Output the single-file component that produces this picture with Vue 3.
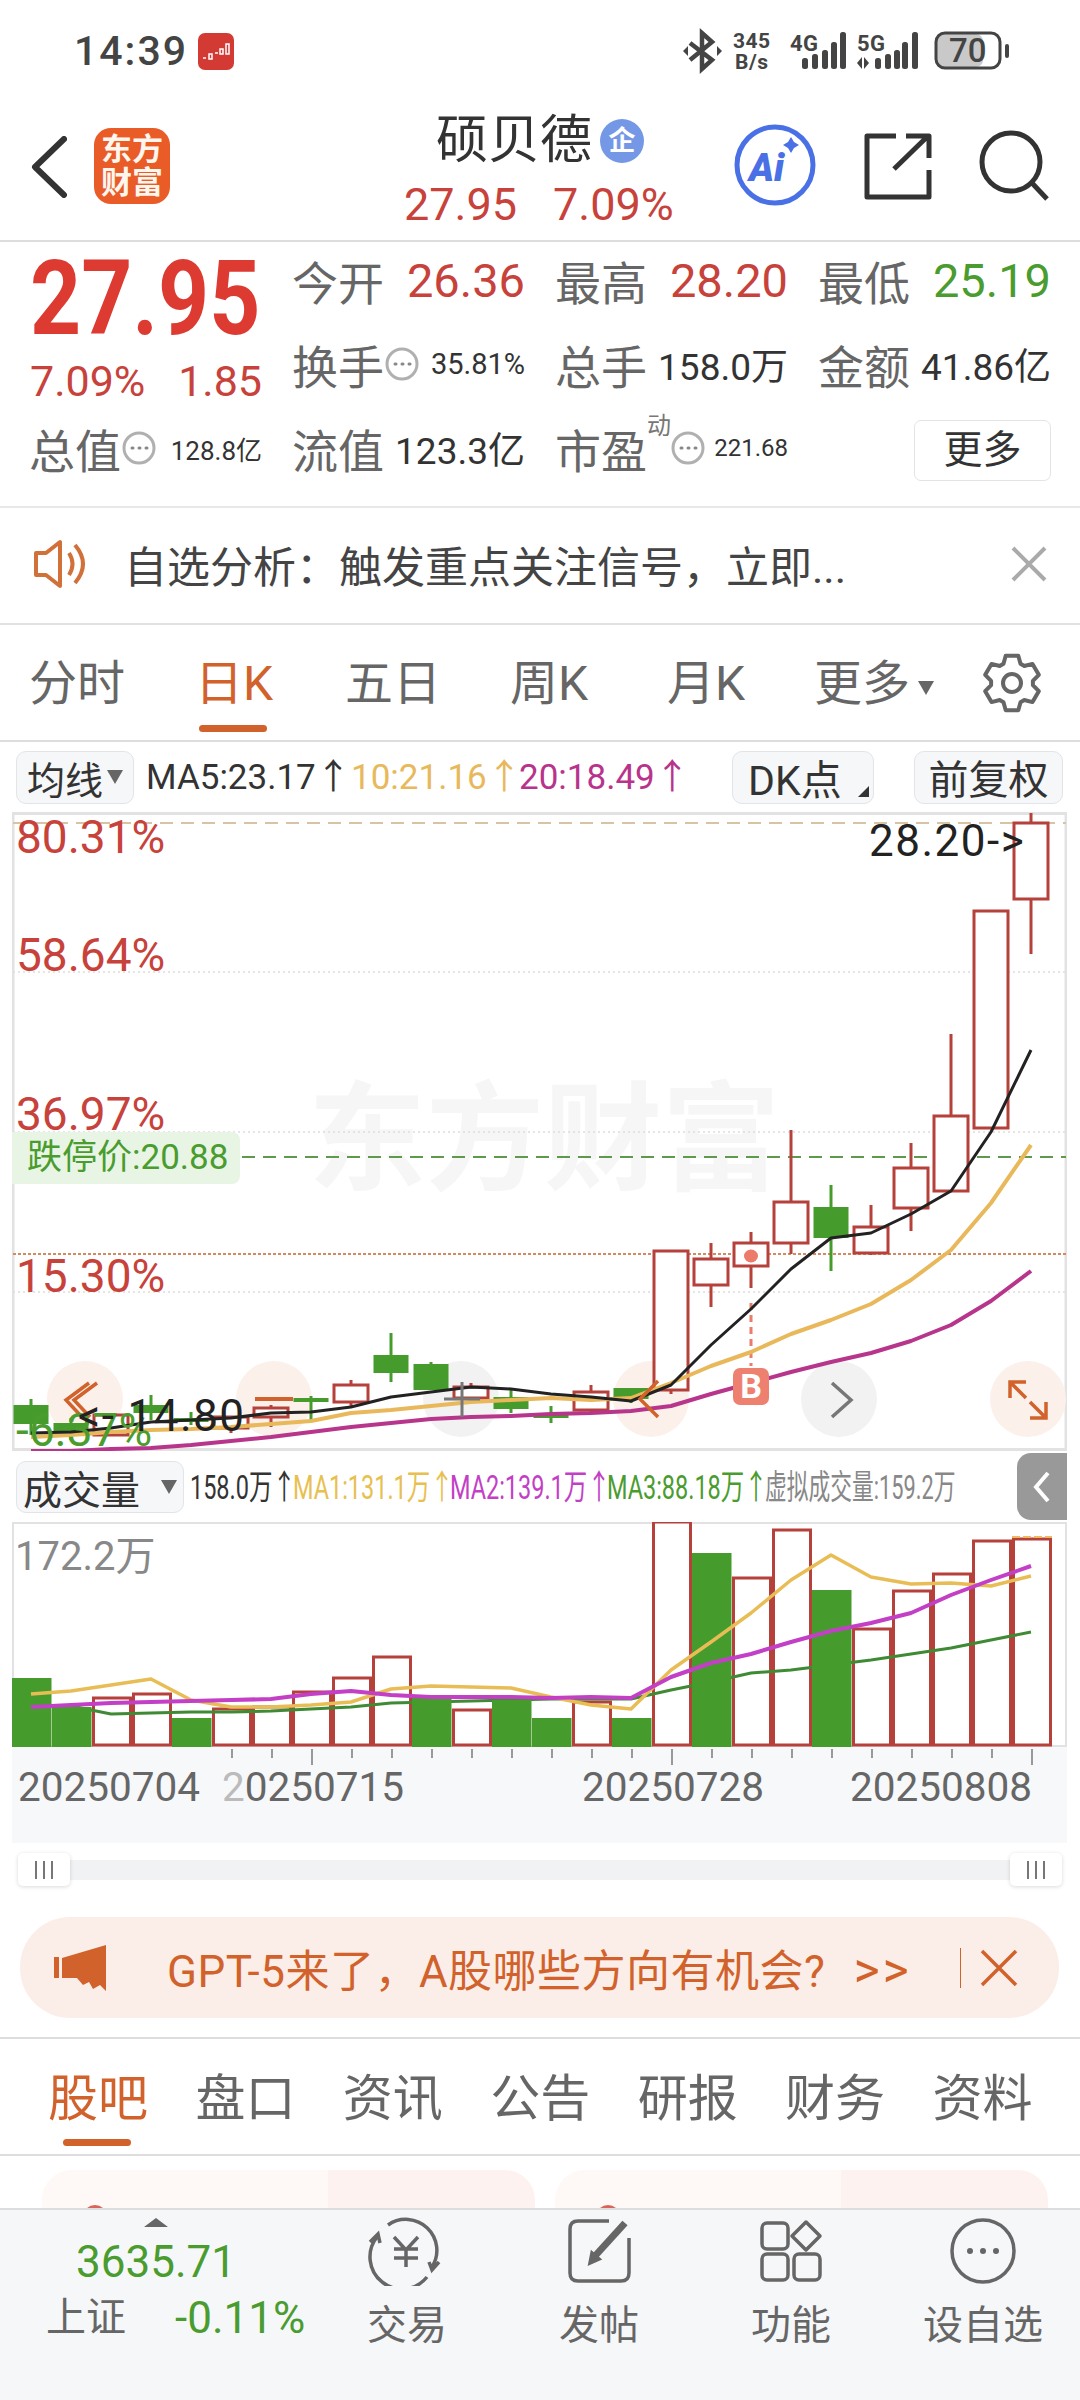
<template>
  <div class="page">
    <!-- status bar -->
    <div class="status">
      <span class="time">14:39</span>
      <svg class="app-icon" width="36" height="37" viewBox="0 0 36 37">
        <rect width="36" height="37" rx="7" fill="#d33a34" />
        <path d="M5 25h3M11 21h3v5h-3zM17 20h3M22 16h3v5h-3zM28 11h3v10h-3z" stroke="#fff" stroke-width="1.5" fill="none" />
      </svg>
      <svg class="status-right" width="335" height="50" viewBox="680 25 335 50">
        <path d="M690 43L712 60L702 69V33L712 42L690 60" fill="none" stroke="#444" stroke-width="4.5" />
        <path d="M688 46v10l-5-5zM717 46v10l5-5z" fill="#444" />
        <text x="733" y="48" class="st-txt">345</text>
        <text x="735" y="69" class="st-txt">B/s</text>
        <text x="790" y="51" class="st-txt narrow">4G</text>
        <rect v-for="b in signal4g" :key="b.x" :x="b.x" :y="b.y" width="6" :height="69 - b.y" rx="2.5" fill="#444" />
        <text x="857" y="51" class="st-txt narrow">5G</text>
        <path d="M857 63l5-6v12zM864 57l5 6-5 6z" fill="#444" />
        <rect v-for="b in signal5g" :key="b.x" :x="b.x" :y="b.y" width="6" :height="69 - b.y" rx="2.5" fill="#444" />
        <rect x="937" y="34" width="46" height="33" rx="7" fill="#c9c9c9" />
        <rect x="936" y="33" width="64" height="35" rx="9" fill="none" stroke="#444" stroke-width="3" />
        <text x="949" y="62" class="batt-txt">70</text>
        <rect x="1005" y="44" width="4" height="14" rx="2" fill="#444" />
      </svg>
    </div>

    <!-- nav -->
    <div class="nav">
      <svg class="back" width="36" height="62" viewBox="0 0 36 62">
        <path d="M33 3L4 31L33 59" fill="none" stroke="#333" stroke-width="6" stroke-linecap="round" stroke-linejoin="round" />
      </svg>
      <div class="logo">东方<br />财富</div>
      <div class="nav-title">
        <div class="name-row">
          <span class="name">硕贝德</span>
          <span class="qi">企</span>
        </div>
        <div class="nav-sub"><span>27.95</span><span>7.09%</span></div>
      </div>
      <svg class="ai" width="82" height="82" viewBox="0 0 82 82">
        <circle cx="41" cy="41" r="38" fill="none" stroke="#4a70e6" stroke-width="5" />
        <text x="15" y="57" class="ai-txt">Ai</text>
        <path d="M57 13l3 5 5 3-5 3-3 5-3-5-5-3 5-3z" fill="#4a70e6" />
      </svg>
      <svg class="share" width="68" height="68" viewBox="0 0 68 68">
        <path d="M32 4H3V65H65V38M30 37L64 4M42 4H65V26" fill="none" stroke="#333" stroke-width="5" stroke-linejoin="round" />
      </svg>
      <svg class="search" width="72" height="72" viewBox="0 0 72 72">
        <circle cx="33" cy="33" r="29" fill="none" stroke="#333" stroke-width="5" />
        <path d="M54 54L69 70" stroke="#333" stroke-width="5" />
      </svg>
    </div>

    <!-- quote grid -->
    <div class="quote">
      <div class="big"><span>27.95</span></div>
      <div class="cell"><span class="lb">今开</span><span class="val red">26.36</span></div>
      <div class="cell"><span class="lb">最高</span><span class="val red">28.20</span></div>
      <div class="cell"><span class="lb">最低</span><span class="val green">25.19</span></div>

      <div class="change"><span>7.09%</span><span>1.85</span></div>
      <div class="cell">
        <span class="lb">换手</span>
        <svg class="dots" viewBox="0 0 34 34"><circle cx="17" cy="17" r="15" /><path d="M10 17h1M17 17h1M24 17h1" /></svg>
        <span class="val mini wide">35.81%</span>
      </div>
      <div class="cell"><span class="lb">总手</span><span class="val mid">158.0万</span></div>
      <div class="cell"><span class="lb">金额</span><span class="val mid">41.86亿</span></div>

      <div class="cell">
        <span class="lb">总值</span>
        <svg class="dots" viewBox="0 0 34 34"><circle cx="17" cy="17" r="15" /><path d="M10 17h1M17 17h1M24 17h1" /></svg>
        <span class="val mini">128.8亿</span>
      </div>
      <div class="cell"><span class="lb">流值</span><span class="val mid">123.3亿</span></div>
      <div class="cell">
        <span class="lb">市盈</span><sup class="dong">动</sup>
        <svg class="dots" viewBox="0 0 34 34"><circle cx="17" cy="17" r="15" /><path d="M10 17h1M17 17h1M24 17h1" /></svg>
        <span class="val mini small">221.68</span>
      </div>
      <div class="more-cell"><span class="more-btn">更多</span></div>
    </div>

    <!-- notice -->
    <div class="notice">
      <svg width="58" height="50" viewBox="0 0 58 50">
        <path d="M3 14H13L27 3V47L13 36H3Z M27 3V47" fill="none" stroke="#d2703a" stroke-width="4" stroke-linejoin="round" />
        <path d="M36 14Q43 25 36 36M42 6Q58 25 42 44" fill="none" stroke="#d2703a" stroke-width="4" />
      </svg>
      <span class="notice-txt">自选分析&#xFF1A;触发重点关注信号&#xFF0C;立即...</span>
      <svg width="36" height="36" viewBox="0 0 36 36">
        <path d="M2 2L34 34M34 2L2 34" stroke="#aaa" stroke-width="4" />
      </svg>
    </div>

    <!-- period tabs -->
    <div class="tabs">
      <div v-for="t in periodTabs" :key="t.name" class="tab" :class="{ on: t.on }" :style="{ width: t.w + 'px' }">
        <span class="tab-txt">{{ t.name }}<i v-if="t.arrow" class="tab-arrow"></i></span>
        <span v-if="t.on" class="tab-bar"></span>
      </div>
      <svg class="gear" width="60" height="60" viewBox="0 0 60 60">
        <path :d="gearPath" fill="none" stroke="#666" stroke-width="4" stroke-linejoin="round" />
        <circle cx="30" cy="30" r="9" fill="none" stroke="#666" stroke-width="4" />
      </svg>
    </div>

    <!-- MA header -->
    <div class="ma-head">
      <span class="sel">均线<i class="sel-arrow"></i></span>
      <span class="ma ma5">MA5:23.17↑</span>
      <span class="ma ma10">10:21.16↑</span>
      <span class="ma ma20">20:18.49↑</span>
      <span class="sel dk">DK点<i class="corner"></i></span>
      <span class="sel fq">前复权</span>
    </div>

    <!-- candle chart -->
    <div class="kline">
      <svg class="chart-svg" width="1055" height="639" viewBox="12 812 1055 639">
        <rect x="13" y="813.5" width="1053" height="636" fill="none" stroke="#e2e2e2" stroke-width="3" />
        <path v-for="y in [972, 1132, 1292]" :key="y" :d="`M13 ${y}H1066`" stroke="#ddd" stroke-width="1.5" stroke-dasharray="2 3" />
        <path d="M13 823H1066" stroke="#d8c3a5" stroke-width="2" stroke-dasharray="13 8" />
        <path d="M242 1157H1066" stroke="#5f9a4c" stroke-width="2" stroke-dasharray="13 8" />
        <path d="M13 1254H1066" stroke="#d38a62" stroke-width="2" stroke-dasharray="3 2" />

        <g clip-path="url(#btnClip)">
          <circle v-for="b in chartBtns" :key="b.x" :cx="b.x" cy="1399" r="38" :fill="b.fill" />
        </g>

        <g v-for="c in candles" :key="c.x">
          <path :d="`M${c.x} ${c.wt}V${c.wb}`" :stroke="c.up ? '#b5413a' : '#459c2d'" stroke-width="3" />
          <rect v-if="c.up" :x="c.x - 17" :y="c.top" width="34" :height="c.bot - c.top" fill="#fff" stroke="#b5413a" stroke-width="3" />
          <rect v-else :x="c.x - 17.5" :y="c.top" width="35" :height="c.bot - c.top" fill="#459c2d" />
        </g>

        <ellipse cx="751" cy="1256" rx="7" ry="6.5" fill="#ec7b6c" />
        <path d="M751 1303V1366" stroke="#ec7b6c" stroke-width="3" stroke-dasharray="7 5" />

        <polyline :points="ma20Pts" class="ln" stroke="#b8358c" stroke-width="4" />
        <polyline :points="ma10Pts" class="ln" stroke="#e9b85a" stroke-width="4" />
        <polyline :points="ma5Pts" class="ln" stroke="#222" stroke-width="3" />

        <rect x="733" y="1368" width="36" height="37" rx="7" fill="#ee8070" />
        <text x="751" y="1398" text-anchor="middle" class="b-txt">B</text>

        <path d="M97 1383L74 1400L90 1417M89 1383L66 1400L82 1417" fill="none" stroke="#d2622b" stroke-width="3.5" />
        <path d="M255 1399H293" stroke="#d2622b" stroke-width="4" />
        <path d="M444 1399H480M462 1382V1417" stroke="#777" stroke-width="3" />
        <path d="M658 1381L640 1399L658 1417" fill="none" stroke="#d2622b" stroke-width="3.5" />
        <path d="M832 1383L851 1400L832 1417" fill="none" stroke="#777" stroke-width="3.5" />
        <path d="M1010 1398V1382H1026M1010 1382L1026 1398M1046 1402V1418H1030M1046 1418L1030 1402" fill="none" stroke="#d2622b" stroke-width="3.5" />

        <defs>
          <clipPath id="btnClip"><rect x="12" y="1355" width="1055" height="82" /></clipPath>
        </defs>
      </svg>

      <div class="watermark">东方财富</div>
      <span class="pct p80">80.31%</span>
      <span class="pct p58">58.64%</span>
      <span class="pct p36">36.97%</span>
      <span class="pct p15">15.30%</span>
      <span class="pct pneg">-6.37%</span>
      <span class="limit">跌停价:20.88</span>
      <span class="mark high">28.20-></span>
      <span class="mark low">&lt;-<span class="low-num">14.80</span></span>
    </div>

    <!-- volume header -->
    <div class="vol-head">
      <span class="sel vol-sel">成交量<i class="sel-arrow"></i></span>
      <div v-for="l in volLegend" :key="l.text" class="leg" :style="{ width: l.w + 'px' }">
        <span class="leg-txt" :class="l.cls">{{ l.text }}</span>
      </div>
      <div class="side-tab">
        <svg width="18" height="32" viewBox="0 0 18 32">
          <path d="M15 2L3 16L15 30" fill="none" stroke="#fff" stroke-width="4" />
        </svg>
      </div>
    </div>

    <!-- volume chart -->
    <div class="vol">
      <svg class="chart-svg" width="1055" height="225" viewBox="12 1522 1055 225">
        <rect x="13" y="1523" width="1053" height="223" fill="none" stroke="#e2e2e2" stroke-width="2" />
        <rect v-for="b in redBars" :key="b.x" :x="b.x + 1.5" :y="b.top" width="37" :height="1745 - b.top" fill="#fff" stroke="#b5413a" stroke-width="3" />
        <path d="M1012 1537H1052" stroke="#f0b860" stroke-width="2" stroke-dasharray="8 3" />
        <polyline :points="ma3Pts" class="ln" stroke="#3f8a34" stroke-width="3" />
        <rect v-for="b in greenBars" :key="b.x" :x="b.x" :y="b.top" width="39.5" :height="1747 - b.top" fill="#459c2d" />
        <polyline :points="ma1Pts" class="ln" stroke="#e9bd55" stroke-width="3.5" />
        <polyline :points="ma2Pts" class="ln" stroke="#c23fc6" stroke-width="4" />
      </svg>
      <span class="vol-max">172.2万</span>
    </div>

    <!-- dates -->
    <div class="dates">
      <svg class="ticks" width="1055" height="18" viewBox="12 1747 1055 18">
        <path v-for="t in ticks" :key="t.x" :d="`M${t.x} 1749V${t.long ? 1765 : 1758}`" stroke="#999" stroke-width="2" />
      </svg>
      <div class="date-row">
        <span class="d1">20250704</span>
        <span class="d2"><em>2</em>0250715</span>
        <span class="d3">20250728</span>
        <span>20250808</span>
      </div>
    </div>

    <!-- range slider -->
    <div class="slider-wrap">
      <div class="slider">
        <div class="handle"><i></i><i></i><i></i></div>
        <div class="handle"><i></i><i></i><i></i></div>
      </div>
    </div>

    <!-- banner -->
    <div class="banner-wrap">
      <div class="banner">
        <svg width="54" height="46" viewBox="0 0 54 46">
          <path d="M1 12H6V33H1ZM9 13L53 0V46L47 40L40 44L36 37L30 40L24 33H9Z" fill="#d2622b" />
        </svg>
        <span class="banner-txt">GPT-5来了&#xFF0C;A股哪些方向有机会?<span class="banner-go">>></span></span>
        <i class="banner-sep"></i>
        <svg width="38" height="38" viewBox="0 0 38 38">
          <path d="M2 2L36 36M36 2L2 36" stroke="#d2622b" stroke-width="3.5" />
        </svg>
      </div>
    </div>

    <!-- info tabs -->
    <div class="tabs info">
      <div v-for="(t, i) in infoTabs" :key="t" class="tab" :class="{ on: i === 0 }">
        <span class="tab-txt">{{ t }}</span>
        <span v-if="i === 0" class="tab-bar"></span>
      </div>
    </div>

    <!-- feed cards, cut off by the dock -->
    <div class="cards">
      <div class="card"><i class="card-dot"></i></div>
      <div class="card"><i class="card-dot"></i></div>
    </div>

    <!-- dock -->
    <div class="dock">
      <div class="index">
        <i class="up-tri"></i>
        <span class="idx-val">3635.71</span>
        <div class="idx-row"><span class="idx-name">上证</span><span class="idx-pct">-0.11%</span></div>
      </div>
      <div class="dock-item">
        <svg width="80" height="70" viewBox="0 0 80 70" class="dock-ic">
          <path d="M21 9A31 31 0 0 1 65 51M60 61A31 31 0 0 1 10 21M72 46L65 54L62 46M3 26L11 18L13 27" />
          <path d="M27 21L39 34L51 21M39 34V51M27 33H51M27 42H51" />
        </svg>
        <span>交易</span>
      </div>
      <div class="dock-item">
        <svg width="80" height="70" viewBox="0 0 80 70" class="dock-ic">
          <path d="M50 5H19Q11 5 11 13V57Q11 65 19 65H62Q70 65 70 57V22" />
          <path d="M36 40L66 7" stroke-width="7" />
          <path d="M31 47L33 37L40 43Z" fill="#666" />
        </svg>
        <span>发帖</span>
      </div>
      <div class="dock-item">
        <svg width="80" height="70" viewBox="0 0 80 70" class="dock-ic">
          <rect x="11" y="7" width="26" height="26" rx="5" />
          <path d="M55 6L69 20L55 34L41 20Z" stroke-linejoin="round" />
          <rect x="11" y="38" width="26" height="26" rx="5" />
          <rect x="43" y="38" width="26" height="26" rx="5" />
        </svg>
        <span>功能</span>
      </div>
      <div class="dock-item">
        <svg width="80" height="70" viewBox="0 0 80 70" class="dock-ic">
          <circle cx="40" cy="35" r="31" />
          <circle cx="27" cy="35" r="3" fill="#666" stroke="none" />
          <circle cx="40" cy="35" r="3" fill="#666" stroke="none" />
          <circle cx="53" cy="35" r="3" fill="#666" stroke="none" />
        </svg>
        <span>设自选</span>
      </div>
    </div>
  </div>
</template>

<script setup>
const tops = [58, 54, 50, 42, 32]
const signal4g = [805, 815, 825, 834, 843].map((x, i) => ({ x: x - 3, y: tops[i] }))
const signal5g = [878, 888, 897, 905, 915].map((x, i) => ({ x: x - 3, y: tops[i] }))

const periodTabs = [
  { name: '分时', w: 170 },
  { name: '日K', w: 146, on: true },
  { name: '五日', w: 165 },
  { name: '周K', w: 157 },
  { name: '月K', w: 147 },
  { name: '更多', w: 170, arrow: true }
]
const infoTabs = ['股吧', '盘口', '资讯', '公告', '研报', '财务', '资料']

// six tooth gear outline
const gearPath = (() => {
  const pts = []
  for (let k = 0; k < 6; k++) {
    const a = -90 + k * 60
    for (const [r, d] of [[21, -24], [28, -13], [28, 13], [21, 24]]) {
      const rad = ((a + d) * Math.PI) / 180
      pts.push(`${(30 + r * Math.cos(rad)).toFixed(1)} ${(30 + r * Math.sin(rad)).toFixed(1)}`)
    }
  }
  return 'M' + pts.join('L') + 'Z'
})()

const chartBtns = [
  { x: 85, fill: '#fbf0ea' },
  { x: 274, fill: '#fbf0ea' },
  { x: 461, fill: '#f2f2f2' },
  { x: 651, fill: '#fbf0ea' },
  { x: 839, fill: '#f2f2f2' },
  { x: 1028, fill: '#fbf0ea' }
]

// top, bottom, wick top, wick bottom, up
const candleRows = [
  [1405, 1424, 1399, 1435, 0],
  [1423, 1433, 1418, 1440, 0],
  [1415, 1435, 1415, 1435, 1],
  [1405, 1413, 1395, 1420, 0],
  [1418, 1422, 1412, 1425, 0],
  [1417, 1428, 1417, 1433, 1],
  [1408, 1417, 1405, 1427, 1],
  [1398, 1402, 1396, 1422, 0],
  [1385, 1402, 1380, 1406, 1],
  [1355, 1373, 1333, 1382, 0],
  [1364, 1390, 1362, 1390, 0],
  [1387, 1398, 1383, 1400, 1],
  [1397, 1409, 1390, 1413, 0],
  [1413, 1418, 1406, 1423, 0],
  [1392, 1410, 1385, 1413, 1],
  [1388, 1399, 1388, 1403, 0],
  [1251, 1390, 1251, 1394, 1],
  [1259, 1285, 1243, 1307, 1],
  [1243, 1266, 1232, 1288, 1],
  [1202, 1243, 1130, 1254, 1],
  [1207, 1238, 1185, 1271, 0],
  [1227, 1253, 1205, 1255, 1],
  [1168, 1208, 1143, 1231, 1],
  [1116, 1191, 1034, 1191, 1],
  [911, 1128, 911, 1128, 1],
  [823, 899, 813, 954, 1]
]
const candles = candleRows.map((r, i) => ({ x: 31 + 40 * i, top: r[0], bot: r[1], wt: r[2], wb: r[3], up: !!r[4] }))

const toPts = ys => ys.map((y, i) => `${31 + 40 * i},${y}`).join(' ')
const ma5Pts = toPts([1433, 1432, 1428, 1422, 1420, 1418, 1413, 1412, 1407, 1397, 1392, 1387, 1389, 1394, 1397, 1401, 1385, 1345, 1309, 1269, 1238, 1233, 1214, 1191, 1132, 1050])
const ma10Pts = toPts([1437, 1435, 1432, 1430, 1429, 1427, 1424, 1421, 1413, 1410, 1406, 1402, 1400, 1398, 1400, 1398, 1383, 1366, 1352, 1334, 1320, 1304, 1280, 1250, 1203, 1145])
const ma20Pts = toPts([1451, 1451, 1449, 1448, 1445, 1441, 1437, 1432, 1427, 1423, 1419, 1417, 1416, 1414, 1413, 1411, 1406, 1394, 1383, 1372, 1362, 1353, 1341, 1325, 1301, 1271])

const volTops = [1678, 1707, 1698, 1694, 1718, 1709, 1707, 1692, 1678, 1657, 1698, 1710, 1700, 1718, 1702, 1718, 1522, 1553, 1578, 1530, 1590, 1629, 1591, 1574, 1541, 1539]
const greenIdx = [0, 1, 4, 10, 12, 13, 15, 17, 20]
const volBars = volTops.map((top, i) => ({ x: 12 + 40 * i, top, green: greenIdx.includes(i) }))
const redBars = volBars.filter(b => !b.green)
const greenBars = volBars.filter(b => b.green)
const ma1Pts = toPts([1694, 1691, 1685, 1679, 1700, 1707, 1707, 1705, 1702, 1689, 1686, 1687, 1688, 1697, 1705, 1709, 1670, 1642, 1613, 1580, 1555, 1577, 1584, 1583, 1586, 1576])
const ma2Pts = toPts([1707, 1705, 1703, 1702, 1701, 1700, 1699, 1694, 1691, 1695, 1697, 1697, 1697, 1698, 1697, 1698, 1677, 1663, 1654, 1642, 1631, 1623, 1613, 1595, 1580, 1566])
const ma3Pts = toPts([1707, 1706, 1714, 1713, 1712, 1712, 1711, 1709, 1707, 1703, 1702, 1701, 1700, 1699, 1699, 1699, 1690, 1682, 1673, 1670, 1665, 1660, 1654, 1648, 1640, 1632])

const volLegend = [
  { text: '158.0万↑', w: 103, cls: 'k' },
  { text: 'MA1:131.1万↑', w: 157, cls: 'y' },
  { text: 'MA2:139.1万↑', w: 157, cls: 'p' },
  { text: 'MA3:88.18万↑', w: 158, cls: 'g' },
  { text: '虚拟成交量:159.2万', w: 190, cls: 'v' }
]

const ticks = Array.from({ length: 21 }, (_, i) => {
  const idx = i + 5
  return { x: 32 + 40 * idx, long: idx === 7 || idx === 16 || idx === 25 }
})
</script>

<style scoped>
.page {
  width: 1080px;
  height: 2400px;
  overflow: hidden;
  background: #fff;
  font-family: Roboto, "Noto Sans CJK SC", sans-serif;
  color: #333;
}

.status {
  height: 100px;
  display: flex;
  align-items: flex-start;
  padding: 26px 0 0 74px;
  box-sizing: border-box;
}
.time {
  font-size: 41px;
  line-height: 50px;
  letter-spacing: 2px;
  color: #444;
  font-weight: 500;
}
.app-icon {
  margin: 7px 0 0 10px;
}
.status-right {
  margin-left: auto;
  margin-right: 65px;
  margin-top: -1px;
}
.st-txt {
  font: 700 21px Roboto, sans-serif;
  fill: #444;
  letter-spacing: .5px;
}
.narrow {
  font-size: 22px;
}
.batt-txt {
  font: 500 33px Roboto, sans-serif;
  fill: #444;
}

.nav {
  height: 142px;
  border-bottom: 2px solid #ddd;
  box-sizing: border-box;
  position: relative;
  display: flex;
  align-items: flex-start;
}
.back {
  margin: 36px 0 0 31px;
}
.logo {
  width: 76px;
  height: 76px;
  margin: 28px 0 0 27px;
  border-radius: 17px;
  background: #e95b27;
  color: #fff6ee;
  font-size: 31px;
  font-weight: 700;
  line-height: 33px;
  text-align: center;
  padding-top: 5px;
  box-sizing: border-box;
}
.nav-title {
  width: 330px;
  margin: 10px 0 0 176px;
  display: flex;
  flex-direction: column;
  align-items: flex-start;
}
.name-row {
  display: flex;
  align-items: center;
  margin-left: 90px;
}
.name {
  font-size: 52px;
  line-height: 62px;
  color: #333;
}
.qi {
  width: 44px;
  height: 44px;
  margin-left: 8px;
  border-radius: 50%;
  background: #7498e6;
  color: #fff;
  font-size: 27px;
  font-weight: 700;
  line-height: 44px;
  text-align: center;
}
.nav-sub {
  display: flex;
  gap: 36px;
  margin: 9px 0 0 58px;
  font-size: 45px;
  line-height: 48px;
  color: #c8423c;
}
.ai {
  margin: 24px 0 0 0;
  position: absolute;
  left: 734px;
}
.ai-txt {
  font: italic 900 38px Roboto, sans-serif;
  fill: #4a70e6;
}
.share {
  position: absolute;
  left: 864px;
  top: 32px;
}
.search {
  position: absolute;
  left: 978px;
  top: 29px;
}

.quote {
  height: 266px;
  box-sizing: border-box;
  border-bottom: 2px solid #e8e8e8;
  padding: 0 29px 0 30px;
  display: grid;
  grid-template-columns: repeat(4, 232px);
  grid-auto-rows: 84px;
  column-gap: 31px;
}
.big {
  font-size: 104px;
  font-weight: 700;
  line-height: 84px;
  color: #dd3a31;
  margin-top: 15px;
  white-space: nowrap;
}
.big span {
  display: inline-block;
  transform: scaleX(.857);
  transform-origin: left center;
}
.change {
  display: flex;
  justify-content: space-between;
  margin-top: 13px;
  font-size: 43px;
  line-height: 84px;
  color: #c8423c;
}
.cell {
  display: flex;
  align-items: center;
  white-space: nowrap;
  padding-bottom: 8px;
  box-sizing: border-box;
}
.lb {
  font-size: 46px;
  color: #666;
  width: 92px;
  margin-left: -1px;
  flex: none;
}
.val {
  margin-left: auto;
  font-size: 47px;
  color: #333;
}
.val.red {
  color: #c8423c;
}
.val.green {
  color: #4a9c2f;
}
.val.mid {
  font-size: 37px;
}
.val.mini {
  font-size: 26px;
}
.val.wide {
  font-size: 29px;
}
.val.small {
  font-size: 24px;
}
.dots {
  width: 34px;
  height: 34px;
  flex: none;
  margin-left: 1px;
}
.dots circle {
  fill: none;
  stroke: #b0b0b0;
  stroke-width: 3;
}
.dots path {
  stroke: #888;
  stroke-width: 3;
  stroke-linecap: round;
}
.dong {
  font-size: 24px;
  color: #777;
  width: 24px;
  margin: -44px 0 0 0;
  flex: none;
  line-height: 30px;
  align-self: center;
}
.dong + .dots {
  margin-left: 0;
}
.more-cell {
  display: flex;
  align-items: center;
  justify-content: flex-end;
}
.more-btn {
  width: 137px;
  height: 61px;
  margin-top: -3px;
  border: 1px solid #e4e4e4;
  border-radius: 7px;
  font-size: 39px;
  line-height: 59px;
  text-align: center;
  color: #333;
  box-sizing: border-box;
}

.notice {
  height: 117px;
  box-sizing: border-box;
  border-bottom: 2px solid #e2e2e2;
  display: flex;
  align-items: center;
  padding: 0 33px;
  padding-bottom: 4px;
}
.notice-txt {
  font-size: 43px;
  color: #444;
  margin-left: 33px;
  white-space: nowrap;
  flex: 1;
}

.tabs {
  height: 117px;
  box-sizing: border-box;
  border-bottom: 2px solid #ddd;
  display: flex;
  padding: 35px 0 0 29px;
}
.tab {
  display: flex;
  flex-direction: column;
  align-items: flex-start;
}
.tab-txt {
  font-size: 48px;
  line-height: 48px;
  color: #666;
  white-space: nowrap;
}
.tab.on .tab-txt {
  color: #d2622b;
  margin-left: -4px;
}
.tab-bar {
  width: 68px;
  height: 7px;
  margin-top: 17px;
  border-radius: 4px;
  background: #d2622b;
}
.tab-arrow {
  display: inline-block;
  margin-left: 8px;
  vertical-align: 5px;
  border-left: 8px solid transparent;
  border-right: 8px solid transparent;
  border-top: 14px solid #666;
}
.gear {
  margin-top: -7px;
  margin-left: -2px;
}

.tabs.info {
  padding: 35px 0 0 48px;
}
.tabs.info .tab {
  width: 147.7px;
}
.tabs.info .tab-txt {
  font-size: 50px;
  line-height: 50px;
}
.tabs.info .tab.on .tab-txt {
  margin-left: 0;
}
.tabs.info .tab-bar {
  margin: 15px 0 0 15px;
}

.ma-head {
  height: 70px;
  display: flex;
  align-items: center;
  padding: 0 16px;
  box-sizing: border-box;
  font-size: 36px;
}
.sel {
  height: 53px;
  padding: 0 10px;
  display: inline-flex;
  align-items: center;
  background: #f6f7f9;
  border: 1px solid #e2e4e8;
  border-radius: 10px;
  box-sizing: border-box;
  color: #333;
  font-size: 38px;
  white-space: nowrap;
}
.sel-arrow {
  display: inline-block;
  margin-left: 4px;
  border-left: 8px solid transparent;
  border-right: 8px solid transparent;
  border-top: 14px solid #666;
}
.ma {
  white-space: nowrap;
  font-size: 35px;
  line-height: 53px;
}
.ma5 {
  margin-left: 12px;
  width: 205px;
  color: #333;
}
.ma10 {
  width: 168px;
  color: #e8b95c;
}
.ma20 {
  width: 213px;
  color: #b8348c;
}
.dk {
  width: 142px;
  position: relative;
  justify-content: flex-start;
  padding-left: 15px;
  font-size: 41px;
}
.corner {
  position: absolute;
  right: 4px;
  bottom: 6px;
  border-left: 11px solid transparent;
  border-bottom: 11px solid #333;
}
.fq {
  width: 149px;
  margin-left: 40px;
  justify-content: center;
  padding: 0;
  font-size: 40px;
}

.kline {
  position: relative;
  width: 1055px;
  height: 639px;
  margin-left: 12px;
}
.chart-svg {
  display: block;
  position: relative;
  z-index: 1;
}
.ln {
  fill: none;
  stroke-linejoin: round;
}
.b-txt {
  font: 700 34px Roboto, sans-serif;
  fill: #fff;
}
.watermark {
  position: absolute;
  left: 296px;
  top: 262px;
  font-size: 118px;
  font-weight: 700;
  line-height: 134px;
  color: #f6f6f6;
  white-space: nowrap;
}
.pct {
  position: absolute;
  left: 4px;
  font-size: 46px;
  line-height: 50px;
  color: #c8423c;
  z-index: 2;
}
.p80 {
  top: 0;
}
.p58 {
  top: 118px;
}
.p36 {
  top: 277px;
}
.p15 {
  top: 439px;
}
.pneg {
  top: 593px;
  color: #4a9c2f;
}
.limit {
  position: absolute;
  left: 0;
  top: 320px;
  width: 228px;
  height: 52px;
  background: #e8f5e4;
  border-radius: 0 8px 8px 0;
  padding-left: 15px;
  box-sizing: border-box;
  font-size: 35px;
  line-height: 52px;
  color: #4a9c2f;
  white-space: nowrap;
  z-index: 2;
}
.mark {
  position: absolute;
  font-size: 44px;
  line-height: 50px;
  letter-spacing: 1.5px;
  color: #222;
  z-index: 2;
  white-space: nowrap;
}
.high {
  left: 857px;
  top: 4px;
}
.low {
  left: 66px;
  top: 579px;
}
.low-num {
  margin-left: 12px;
}

.vol-head {
  height: 71px;
  display: flex;
  align-items: center;
  padding-left: 16px;
  position: relative;
  box-sizing: border-box;
}
.vol-sel {
  width: 168px;
  height: 52px;
  padding: 0 6px;
  justify-content: space-between;
  margin-right: 6px;
  font-size: 39px;
}
.leg {
  height: 40px;
  overflow: visible;
  white-space: nowrap;
  flex: none;
}
.leg-txt {
  display: inline-block;
  font-size: 34px;
  line-height: 40px;
  transform: scaleX(.69);
  transform-origin: left center;
}
.leg-txt.k {
  color: #333;
}
.leg-txt.y {
  color: #e8c050;
}
.leg-txt.p {
  color: #c23fc6;
}
.leg-txt.g {
  color: #4a9c2f;
}
.leg-txt.v {
  color: #888;
  transform: scaleX(.64);
}
.side-tab {
  position: absolute;
  left: 1017px;
  top: 2px;
  width: 50px;
  height: 67px;
  background: #999;
  border-radius: 14px 0 0 14px;
  display: flex;
  align-items: center;
  justify-content: flex-end;
  padding-right: 16px;
  box-sizing: border-box;
}

.vol {
  position: relative;
  width: 1055px;
  height: 225px;
  margin-left: 12px;
}
.vol-max {
  position: absolute;
  left: 3px;
  top: 10px;
  font-size: 40px;
  line-height: 50px;
  color: #888;
  z-index: 2;
}

.dates {
  width: 1055px;
  height: 96px;
  margin-left: 12px;
  background: #f7f8fa;
}
.ticks {
  display: block;
}
.date-row {
  display: flex;
  padding-left: 6px;
  font-size: 40.5px;
  line-height: 44px;
  color: #666;
}
.d1 {
  width: 204px;
}
.d2 {
  width: 360px;
}
.d2 em {
  font-style: normal;
  color: #bbb;
}
.d3 {
  width: 268px;
}

.slider-wrap {
  height: 74px;
  padding: 10px 18px 0;
  box-sizing: border-box;
}
.slider {
  height: 33px;
  position: relative;
  display: flex;
  justify-content: space-between;
  width: 1044px;
}
.slider::before {
  content: "";
  position: absolute;
  left: 0;
  right: 0;
  top: 7px;
  height: 20px;
  background: #f1f2f4;
  border-radius: 10px;
}
.handle {
  width: 52px;
  height: 33px;
  position: relative;
  background: #fff;
  border-radius: 5px;
  box-shadow: 0 1px 4px rgba(0, 0, 0, .15);
  display: flex;
  align-items: center;
  justify-content: center;
  gap: 6px;
}
.handle i {
  width: 2px;
  height: 18px;
  background: #777;
}

.banner-wrap {
  height: 122px;
  box-sizing: border-box;
  border-bottom: 2px solid #ddd;
  padding: 0 21px 0 20px;
}
.banner {
  height: 101px;
  border-radius: 50px;
  background: #fbeee8;
  display: flex;
  align-items: center;
  padding-left: 33px;
}
.banner-txt {
  margin-left: 60px;
  width: 793px;
  font-size: 44px;
  letter-spacing: .5px;
  color: #d2622b;
  white-space: nowrap;
}
.banner-go {
  margin-left: 28px;
  font-size: 50px;
  letter-spacing: 3px;
}
.banner-sep {
  width: 1px;
  height: 40px;
  background: #d2622b;
}
.banner svg:last-child {
  margin-left: 19px;
}

.cards {
  height: 52px;
  display: flex;
  gap: 20px;
  padding: 14px 0 0 42px;
  box-sizing: border-box;
  overflow: hidden;
}
.card {
  width: 493px;
  height: 60px;
  flex: none;
  position: relative;
  border-radius: 30px 30px 0 0;
  background: linear-gradient(90deg, #fef8f6 0, #fef8f6 58%, #fdf2ef 58%);
}
.card-dot {
  position: absolute;
  left: 41px;
  top: 35px;
  width: 24px;
  height: 24px;
  border-radius: 50%;
  background: #d8655c;
}

.dock {
  height: 192px;
  box-sizing: border-box;
  border-top: 2px solid #ddd;
  background: #f6f7f9;
  display: flex;
}
.index {
  width: 311px;
  flex: none;
  display: flex;
  flex-direction: column;
  align-items: flex-start;
}
.up-tri {
  margin: 8px 0 0 144px;
  border-left: 12px solid transparent;
  border-right: 12px solid transparent;
  border-bottom: 9px solid #666;
}
.idx-val {
  margin: 13px 0 0 76px;
  font-size: 44px;
  line-height: 44px;
  color: #4a9c2f;
}
.idx-row {
  display: flex;
  margin: 12px 0 0 46px;
  line-height: 44px;
}
.idx-name {
  width: 129px;
  font-size: 40px;
  color: #666;
}
.idx-pct {
  font-size: 44px;
  color: #4a9c2f;
}
.dock-item {
  width: 192px;
  flex: none;
  display: flex;
  flex-direction: column;
  align-items: center;
  padding-top: 6px;
  font-size: 40px;
  line-height: 44px;
  color: #666;
}
.dock-ic {
  fill: none;
  stroke: #666;
  stroke-width: 3.5;
  margin-bottom: 18px;
}
</style>
